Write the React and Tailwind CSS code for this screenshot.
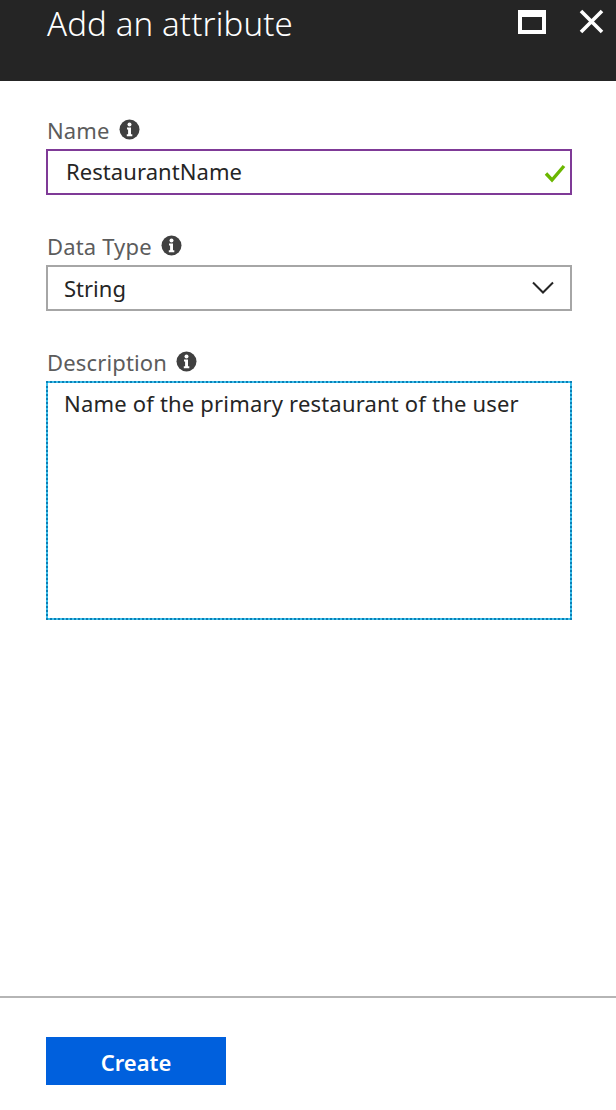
import React from 'react';

function InfoIcon() {
  return (
    <svg width="21" height="21" viewBox="0 0 21 21" className="block">
      <circle cx="10.5" cy="10.5" r="10" fill="#404040" />
      <circle cx="10.5" cy="5.6" r="2" fill="#fff" />
      <path d="M8 8.6h4v6.6h1.3v2H7.8v-2h1.3v-4.6H8z" fill="#fff" />
    </svg>
  );
}

function Label({ text }) {
  return (
    <div className="flex items-center gap-[9px] h-[24px] mb-[7px] text-[22px] leading-[24px] tracking-[0.15px] text-[#5c5c5c]">
      <span className="pl-[1px]">{text}</span>
      <span className="-mt-[2px]"><InfoIcon /></span>
    </div>
  );
}

export default function App() {
  return (
    <div className="w-[616px] h-[1110px] bg-white flex flex-col font-['Noto_Sans','Open_Sans',sans-serif]">
      <div className="h-[81px] bg-[#252525] flex items-start justify-between pl-[47px] pr-[12px] shrink-0">
        <div className="text-[33px] leading-[46px] pt-[1px] font-light tracking-[0.13px] text-white">Add an attribute</div>
        <div className="flex items-center gap-[33px] mt-[9px]">
          <div className="w-[28px] h-[24px] border-white border-[4px] border-t-[7px]" />
          <svg width="25" height="25" viewBox="0 0 25 25">
            <path d="M2 2l21 21M23 2L2 23" stroke="#fff" strokeWidth="3.6" fill="none" />
          </svg>
        </div>
      </div>

      <div className="flex-1 px-[46px] pr-[44px] pt-[37px]">
        <Label text="Name" />
        <div className="h-[46px] border-2 border-[#7f3a97] flex items-center justify-between pl-[18px] pr-[4px] text-[22px] tracking-[0.07px] text-[#252525] mb-[39px]">
          <span className="pb-[2px]">RestaurantName</span>
          <svg width="22" height="20" viewBox="0 0 22 20" className="mt-[1px]">
            <path d="M2 10.5l6 6.5L20 3" stroke="#6bb700" strokeWidth="3.4" fill="none" />
          </svg>
        </div>

        <Label text="Data Type" />
        <div className="h-[46px] border-2 border-[#a6a6a6] flex items-center justify-between pl-[16px] pr-[16px] text-[22px] text-[#252525] mb-[39px]">
          <span>String</span>
          <svg width="22" height="14" viewBox="0 0 22 14">
            <path d="M1 1.5l10 10 10-10" stroke="#252525" strokeWidth="2" fill="none" />
          </svg>
        </div>

        <Label text="Description" />
        <div className="h-[239px] border-2 border-dotted border-[#0b7fb5] bg-[#3cc0ec]">
          <div className="h-full bg-white pl-[16px] pt-[4px] text-[22px] leading-[32px] tracking-[0.19px] text-[#252525]">
            Name of the primary restaurant of the user
          </div>
        </div>
      </div>

      <div className="h-[114px] border-t-2 border-[#b5b5b5] pt-[39px] pl-[46px] shrink-0">
        <button className="w-[180px] h-[48px] bg-[#0060dd] text-white text-[22px] font-semibold pt-[2px] flex items-center justify-center">
          Create
        </button>
      </div>
    </div>
  );
}
